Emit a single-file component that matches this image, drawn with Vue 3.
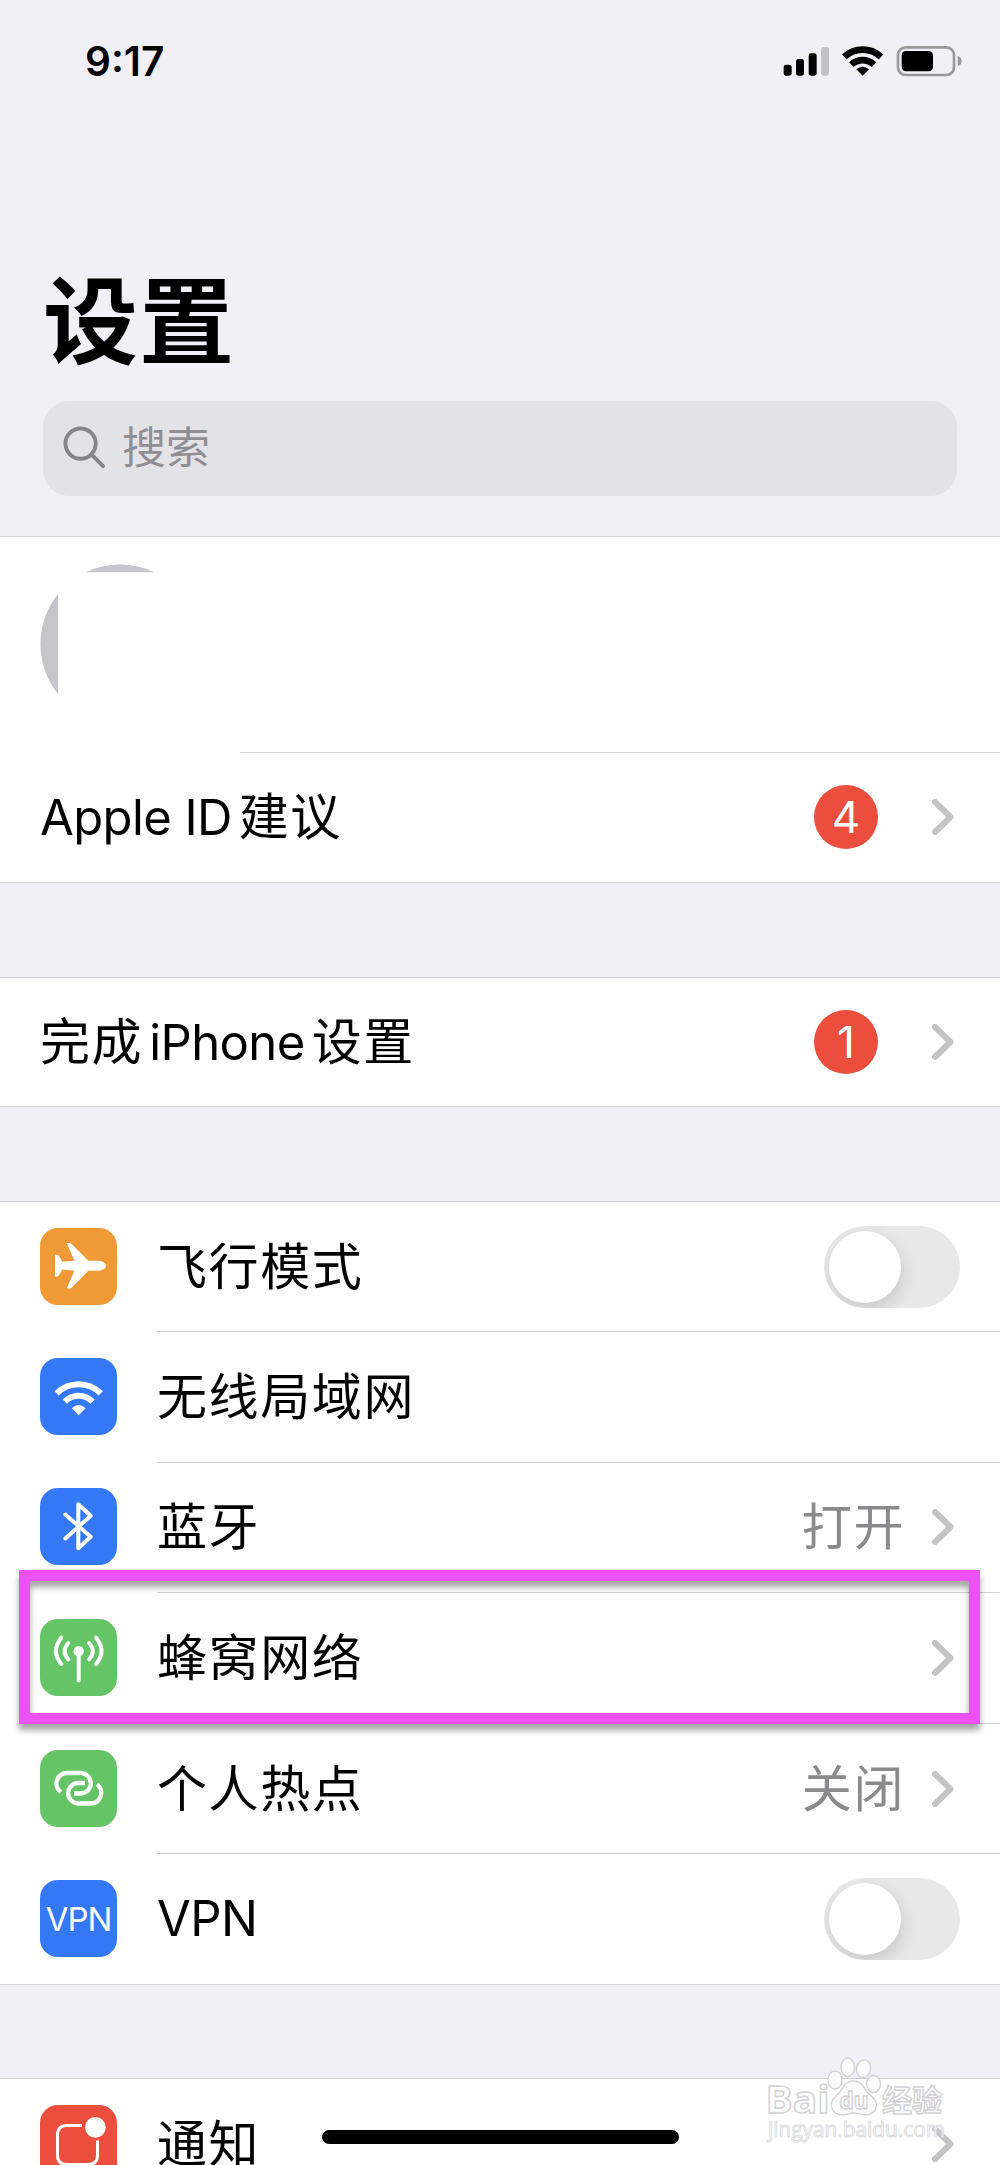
<script setup>
const network = [
  { icon: 'plane', color: 'orange', label: '飞行模式', toggle: true },
  { icon: 'wifi', color: 'blue', label: '无线局域网' },
  { icon: 'bluetooth', color: 'blue', label: '蓝牙', value: '打开', arrow: true },
  { icon: 'cellular', color: 'green', label: '蜂窝网络', arrow: true, marked: true },
  { icon: 'hotspot', color: 'green', label: '个人热点', value: '关闭', arrow: true },
  { icon: 'vpn', color: 'blue', label: 'VPN', latin: true, toggle: true },
]
</script>

<template>
  <div class="screen">
    <header class="status">
      <span class="time">9:17</span>
      <svg class="indicators" viewBox="0 0 540 96">
        <rect x="2" y="59" width="24" height="33" rx="7" />
        <rect x="39" y="42" width="24" height="50" rx="7" />
        <rect x="77" y="25" width="24" height="67" rx="7" />
        <rect x="114" y="6" width="24" height="86" rx="7" fill="#c3c2c7" />
        <g fill="none" stroke="#000" stroke-width="20">
          <path d="M184 36A79 79 0 0 1 294 36" />
          <path d="M205 59A49 49 0 0 1 273 59" />
        </g>
        <path d="M239 92L220 73Q239 57 258 73Z" />
        <rect x="345" y="7" width="168" height="83" rx="23" fill="none" stroke="#99999c" stroke-width="8" />
        <rect x="356" y="18" width="94" height="61" rx="13" />
        <path d="M524 32Q536 37 536 48T524 64Z" fill="#99999c" />
      </svg>
    </header>

    <h1 class="title">设置</h1>

    <div class="search">
      <svg class="glass" viewBox="0 0 44 44">
        <circle cx="18" cy="18" r="15.5" />
        <path d="M29.5 29.5L41 41" />
      </svg>
      <span>搜索</span>
    </div>

    <section class="group account">
      <div class="profile">
        <svg class="avatar" viewBox="0 0 160 160">
          <path d="M46 8.200A80 80 0 0 1 114 8.200Z" />
          <path d="M18 30A80 80 0 0 0 18 130Z" />
        </svg>
      </div>
      <div class="row">
        <div class="body">
          <span class="label"><span class="latin apple">Apple ID</span>建议</span>
          <span class="badge">4</span>
          <svg class="arrow" viewBox="0 0 22 36"><path d="M3 3L18.500 18L3 33" /></svg>
        </div>
      </div>
    </section>

    <section class="group finish">
      <div class="row">
        <div class="body">
          <span class="label">完成<span class="latin iphone">iPhone</span>设置</span>
          <span class="badge">1</span>
          <svg class="arrow" viewBox="0 0 22 36"><path d="M3 3L18.500 18L3 33" /></svg>
        </div>
      </div>
    </section>

    <section class="group network">
      <div v-for="item in network" :key="item.icon" class="row with-icon">
        <div class="icon" :class="item.color">
          <span v-if="item.icon === 'vpn'" class="vpn">VPN</span>
          <svg v-else viewBox="0 0 77 77">
            <path
              v-if="item.icon === 'plane'" fill="#fff"
              d="M26.700 15H29.500Q31 15 32.200 16.500L48.500 32.700H58C63 33 66 35.500 66 37.700S63 42.400 58 42.700H48.500L32.200 59Q31 60.500 29.500 60.500H26.700L34.500 42.700L22.300 41.500L18.700 47.800Q18 48.700 15 48.700V26.700Q18 26.700 18.700 27.600L22.300 33.700L34.500 32.700Z"
            />
            <template v-if="item.icon === 'wifi'">
              <g fill="none" stroke="#fff" stroke-width="6">
                <path d="M16.600 35.400A31.300 31.300 0 0 1 60.800 35.400" />
                <path d="M24.800 43.600A19.700 19.700 0 0 1 52.600 43.600" />
              </g>
              <path fill="#fff" d="M38.700 57.300L31.800 50.300Q38.700 43.700 45.600 50.300Z" />
            </template>
            <path v-if="item.icon === 'bluetooth'" class="line" d="M25.300 26.500L50.700 48.800L38.300 60.200V16.200L50.700 27.800L25.300 50.500" />
            <template v-if="item.icon === 'cellular'">
              <circle cx="38.700" cy="32.300" r="5.200" fill="#fff" />
              <g class="line">
                <path d="M38.700 34V61.500" />
                <path d="M28.300 24Q21 32.300 28.300 40.300M21.300 18.700Q10.500 32 21.300 45" />
                <path d="M49.100 24Q56.400 32.300 49.100 40.300M56.100 18.700Q66.900 32 56.100 45" />
              </g>
            </template>
            <path
              v-if="item.icon === 'hotspot'" class="line link"
              d="M21 42C12.500 36 16.500 23 28 23H41.500A10.300 10.300 0 0 1 41.500 43.500H34M45 33H37.500A10.300 10.300 0 0 0 37.500 53.500H50C61 53.500 65 40.500 57 34.500"
            />
          </svg>
        </div>
        <div class="body">
          <span class="label" :class="{ latin: item.latin }">{{ item.label }}</span>
          <span v-if="item.value" class="value">{{ item.value }}</span>
          <span v-if="item.toggle" class="toggle" />
          <svg v-if="item.arrow" class="arrow" viewBox="0 0 22 36"><path d="M3 3L18.500 18L3 33" /></svg>
        </div>
        <div v-if="item.marked" class="marker" />
      </div>
    </section>

    <section class="group notice">
      <div class="row with-icon">
        <div class="icon red">
          <svg viewBox="0 0 77 77">
            <path fill="none" stroke="#fff" stroke-width="3" d="M42 20.500H27Q17.500 20.500 17.500 30V50Q17.500 59.500 27 59.500H48Q57.500 59.500 57.500 50V35.500" />
            <circle cx="55.400" cy="22.300" r="10.400" fill="#fff" />
          </svg>
        </div>
        <div class="body">
          <span class="label">通知</span>
          <svg class="arrow" viewBox="0 0 22 36"><path d="M3 3L18.500 18L3 33" /></svg>
        </div>
      </div>
    </section>

    <div class="home-bar" />

    <svg class="watermark" viewBox="0 0 200 100">
      <g class="paw">
        <ellipse cx="75" cy="30" rx="7" ry="9" />
        <ellipse cx="87.700" cy="17.300" rx="6.800" ry="9.300" />
        <ellipse cx="103.500" cy="18.700" rx="7" ry="9" transform="rotate(10 103.500 18.700)" />
        <ellipse cx="113.500" cy="34" rx="7" ry="8.500" />
        <path d="M93.500 31C83 31 84 40 76 46C67 54 72 65 83 65C88 65 90 63 94 63S101 65 106 65C117 64 120 53 111 46C103 40 104 31 93.500 31Z" />
      </g>
      <text x="5.500" y="63" font-size="38" font-weight="700" textLength="64" lengthAdjust="spacingAndGlyphs">Bai</text>
      <text class="du" x="79.500" y="59" font-size="24" font-weight="700" textLength="29" lengthAdjust="spacingAndGlyphs">du</text>
      <text x="122" y="61" font-size="30" font-weight="700" textLength="60">经验</text>
      <text class="url" x="8" y="87" font-size="22" textLength="177" lengthAdjust="spacingAndGlyphs">jingyan.baidu.com</text>
    </svg>
  </div>
</template>

<style>
body {
  background: #f1f0f6;
}
</style>

<style scoped>
.screen {
  position: relative;
  width: 1000px;
  height: 2165px;
  overflow: hidden;
  background: #f1f0f6;
  color: #000;
  font-family: Inter, "Noto Sans CJK SC", sans-serif;
}

.status {
  display: flex;
  justify-content: space-between;
  height: 122px;
  padding: 0 37px 0 85px;
  box-sizing: border-box;
}

.time {
  padding-top: 37px;
  font-size: 40.5px;
  font-weight: 600;
  line-height: 50px;
}

.indicators {
  width: 180px;
  height: 32px;
  margin-top: 45px;
}

.title {
  height: 279px;
  margin: 0;
  padding: 151px 0 0 43px;
  box-sizing: border-box;
  font-size: 95px;
  font-weight: 700;
  letter-spacing: 1px;
  line-height: 100px;
}

.search {
  display: flex;
  align-items: center;
  height: 95px;
  margin: 0 43px;
  padding: 0 0 2px 20px;
  box-sizing: border-box;
  border-radius: 26px;
  background: #e3e2e7;
  color: #8f8e93;
  font-size: 44px;
  line-height: 60px;
}

.glass {
  width: 43px;
  height: 43px;
  margin-right: 16px;
  fill: none;
  stroke: #85858a;
  stroke-width: 4;
  stroke-linecap: round;
}

.group {
  box-sizing: border-box;
  border-top: 1px solid #cfcfd2;
  border-bottom: 1px solid #d4d4d7;
  background: #fff;
}

.account {
  height: 347px;
  margin-top: 40px;
}

.finish {
  height: 130px;
  margin-top: 94px;
}

.network {
  height: 784px;
  margin-top: 94px;
}

.notice {
  height: 132px;
  margin-top: 93px;
}

.profile {
  height: 215px;
  padding: 27px 0 0 40px;
  box-sizing: border-box;
}

.avatar {
  width: 160px;
  height: 160px;
  fill: #c6c5ca;
}

.row {
  position: relative;
  display: flex;
  align-items: center;
  height: 130.6px;
  padding-left: 40px;
  box-sizing: border-box;
}

.account .row {
  height: 129px;
  background: linear-gradient(#cfcfd2, #cfcfd2) 240px 0 / 760px 1px no-repeat;
}

.finish .row {
  height: 127px;
}

.network .row:first-child,
.notice .row {
  height: 129px;
}

.body {
  display: flex;
  flex: 1;
  align-items: center;
  height: 100%;
  padding-right: 46px;
  box-sizing: border-box;
  border-top: 1px solid transparent;
}

.with-icon + .with-icon .body {
  border-color: #cfcfd2;
}

.label {
  flex: 1;
  font-size: 50px;
  letter-spacing: 1.6px;
  line-height: 70px;
  white-space: nowrap;
}

.latin {
  font-size: 49px;
  letter-spacing: -0.6px;
}

.apple {
  margin-right: 7px;
}

.iphone {
  margin: 0 7px 0 6px;
}

.value {
  margin-right: 27px;
  color: #8a8a8d;
  font-size: 50px;
  letter-spacing: 1.6px;
  line-height: 70px;
}

.badge {
  width: 64px;
  height: 64px;
  margin-right: 54px;
  border-radius: 50%;
  background: #eb4e3d;
  color: #fff;
  font-size: 44px;
  line-height: 64px;
  text-align: center;
}

.arrow {
  width: 22px;
  height: 36px;
  fill: none;
  stroke: #c4c4c7;
  stroke-width: 6;
  stroke-linecap: round;
  stroke-linejoin: round;
}

.icon {
  display: flex;
  align-items: center;
  justify-content: center;
  width: 77px;
  height: 77px;
  margin-right: 40px;
  border-radius: 18px;
}

.icon svg {
  width: 77px;
  height: 77px;
}

.orange {
  background: #f09a37;
}

.blue {
  background: #3478f6;
}

.green {
  background: #65c466;
}

.red {
  background: #eb4e3d;
}

.line {
  fill: none;
  stroke: #fff;
  stroke-width: 4;
  stroke-linecap: round;
  stroke-linejoin: round;
}

.link {
  stroke-width: 4.3;
  stroke-linecap: butt;
}

.vpn {
  color: #fff;
  font-size: 33px;
  font-weight: 400;
  letter-spacing: -1px;
}

.toggle {
  width: 136px;
  height: 82px;
  margin-right: -6px;
  padding: 5px;
  box-sizing: border-box;
  border-radius: 41px;
  overflow: hidden;
  background: #e8e8e8;
}

.toggle::before {
  content: "";
  display: block;
  width: 72px;
  height: 72px;
  border-radius: 50%;
  background: #fff;
  box-shadow: 2px 6px 16px rgba(0, 0, 0, 0.14);
}

/* callout drawn over the row, a bit larger than it */
.marker {
  position: absolute;
  z-index: 1;
  top: -22px;
  right: 20px;
  bottom: -1px;
  left: 19px;
  border: 11.5px solid #ec50f7;
  filter: drop-shadow(0 6px 3px rgba(0, 0, 0, 0.36));
}

.home-bar {
  position: absolute;
  top: 2130px;
  left: 322px;
  width: 357px;
  height: 14px;
  border-radius: 7px;
  background: #000;
}

.watermark {
  position: absolute;
  top: 2050px;
  left: 760px;
  width: 200px;
  height: 100px;
  fill: #fff;
  stroke: #d2d2d5;
  stroke-width: 1.4;
  font-family: "Open Sans", "Noto Sans CJK SC", sans-serif;
}

.watermark .paw {
  fill: #fbfbfc;
}

.watermark .url {
  fill: rgba(255, 255, 255, 0.7);
  stroke: #dcdcde;
  stroke-width: 1;
}
</style>
